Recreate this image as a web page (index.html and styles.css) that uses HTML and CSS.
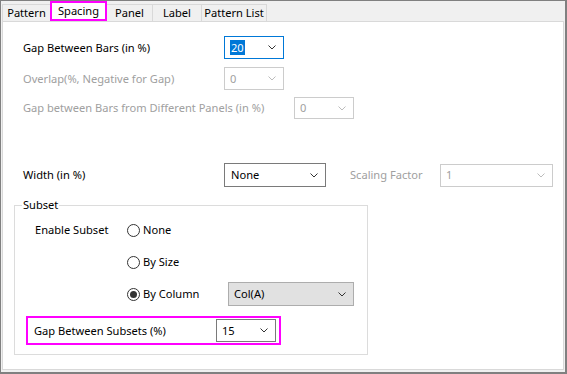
FILE: index.html
```html
<!DOCTYPE html>
<html>
<head>
<meta charset="utf-8">
<link rel="stylesheet" href="styles.css">
</head>
<body>
<div class="dialog">
  <div class="tabs">
    <div class="tab w-pattern">Pattern</div>
    <div class="tab tab-active w-spacing">Spacing</div>
    <div class="tab w-panel">Panel</div>
    <div class="tab w-label">Label</div>
    <div class="tab tab-last w-plist">Pattern List</div>
  </div>
  <div class="panel">
    <div class="row row1">
      <span class="label lw1">Gap Between Bars (in %)</span>
      <div class="combo combo-focus c60">
        <span class="value"><span class="sel">20</span></span>
        <svg class="chev" width="8" height="5" viewBox="0 0 8 5"><polyline points="0.5,0.5 4,4 7.5,0.5" fill="none" stroke="#333" stroke-width="1"/></svg>
      </div>
    </div>
    <div class="row row2">
      <span class="label lw1 disabled">Overlap(%, Negative for Gap)</span>
      <div class="combo combo-disabled c60">
        <span class="value">0</span>
        <svg class="chev" width="8" height="5" viewBox="0 0 8 5"><polyline points="0.5,0.5 4,4 7.5,0.5" fill="none" stroke="#bcbcbc" stroke-width="1"/></svg>
      </div>
    </div>
    <div class="row row3">
      <span class="label lw3 disabled">Gap between Bars from Different Panels (in %)</span>
      <div class="combo combo-disabled c60 h22">
        <span class="value">0</span>
        <svg class="chev" width="8" height="5" viewBox="0 0 8 5"><polyline points="0.5,0.5 4,4 7.5,0.5" fill="none" stroke="#bcbcbc" stroke-width="1"/></svg>
      </div>
    </div>
    <div class="row row4">
      <span class="label lw1">Width (in %)</span>
      <div class="combo c102 h24">
        <span class="value v7">None</span>
        <svg class="chev" width="8" height="5" viewBox="0 0 8 5"><polyline points="0.5,0.5 4,4 7.5,0.5" fill="none" stroke="#333" stroke-width="1"/></svg>
      </div>
      <span class="label lw-sf disabled">Scaling Factor</span>
      <div class="combo combo-disabled c113">
        <span class="value">1</span>
        <svg class="chev" width="8" height="5" viewBox="0 0 8 5"><polyline points="0.5,0.5 4,4 7.5,0.5" fill="none" stroke="#bcbcbc" stroke-width="1"/></svg>
      </div>
    </div>
    <fieldset class="group">
      <legend class="legend">Subset</legend>
      <div class="subset-grid">
        <span class="label">Enable Subset</span>
        <label class="radio-item"><span class="radio"></span>None</label>
        <span></span>
        <span></span>
        <label class="radio-item"><span class="radio"></span>By Size</label>
        <span></span>
        <span></span>
        <label class="radio-item"><span class="radio radio-on"></span>By Column</label>
        <div class="combo combo-button c126 h24">
          <span class="value v5">Col(A)</span>
          <svg class="chev" width="8" height="5" viewBox="0 0 8 5"><polyline points="0.5,0.5 4,4 7.5,0.5" fill="none" stroke="#333" stroke-width="1"/></svg>
        </div>
      </div>
      <div class="highlight-box">
        <span class="label lw-gs">Gap Between Subsets (%)</span>
        <div class="combo c60">
          <span class="value">15</span>
          <svg class="chev" width="8" height="5" viewBox="0 0 8 5"><polyline points="0.5,0.5 4,4 7.5,0.5" fill="none" stroke="#333" stroke-width="1"/></svg>
        </div>
      </div>
    </fieldset>
  </div>
</div>
</body>
</html>
```
FILE: styles.css
```css
* { box-sizing: border-box; }
html, body { margin: 0; padding: 0; }
body {
  width: 567px;
  height: 374px;
  font-family: "Noto Sans", "Open Sans", sans-serif;
  font-size: 11.1px;
  color: #000;
  background: #f0f0f0;
  overflow: hidden;
}
.dialog {
  width: 567px;
  height: 374px;
  background: #f0f0f0;
  border-style: solid;
  border-color: #808080;
  border-width: 1px 2px 2px 1px;
  display: flex;
  flex-direction: column;
}
.tabs {
  display: flex;
  align-items: flex-end;
  height: 20px;
  padding-left: 1px;
}
.tab {
  height: 17px;
  border-top: 1px solid #d9d9d9;
  border-left: 1px solid #d9d9d9;
  background: #f0f0f0;
  display: flex;
  align-items: center;
  justify-content: center;
  line-height: 14px;
  white-space: nowrap;
}
.tab-last { border-right: 1px solid #d9d9d9; }
.tab-active {
  height: 20px;
  background: #fff;
  border-right: 1px solid #d9d9d9;
  outline: 2px solid #ff00ff;
  outline-offset: -2px;
  padding-bottom: 2px;
}
.tab-active + .tab { border-left: none; }
.w-pattern { width: 48px; }
.w-spacing { width: 57px; }
.w-panel { width: 45px; }
.w-label { width: 49px; }
.w-plist { width: 66px; }

.panel {
  flex: 1;
  margin: 0 1px 2px 1px;
  background: #fff;
  border: 1px solid #d9d9d9;
  display: flex;
  flex-direction: column;
}
.row {
  display: flex;
  align-items: center;
  padding-left: 20px;
}
.row1 { margin-top: 14px; }
.row2 { margin-top: 8px; }
.row3 { margin-top: 7px; }
.row4 { margin-top: 44px; }
.label { white-space: nowrap; line-height: 16px; }
.lw1 { width: 201px; flex: none; }
.lw3 { width: 271px; flex: none; }
.lw-sf { width: 90px; flex: none; margin-left: 24px; }
.lw-gs { width: 182px; flex: none; }
.disabled { color: #a0a0a0; }

.combo {
  position: relative;
  height: 23px;
  border: 1px solid #7a7a7a;
  background: #fff;
  display: flex;
  align-items: center;
  justify-content: space-between;
  padding: 0 7px 0 5px;
  flex: none;
}
.combo-focus { border-color: #0078d7; }
.combo-disabled { border-color: #cccccc; color: #a0a0a0; }
.combo-button { background: #e1e1e1; border-color: #adadad; }
.c60 { width: 60px; }
.c102 { width: 102px; }
.c113 { width: 113px; }
.c126 { width: 126px; }
.h22 { height: 22px; }
.h24 { height: 24px; }
.value { line-height: 16px; }
.v7 { padding-left: 1px; }
.v5 { padding-left: 0; }
.sel {
  background: #0078d7;
  color: #fff;
  display: inline-block;
  line-height: 15px;
  padding: 0 1px;
}
.chev { display: block; }

.group {
  margin: 10px 0 0 11px;
  width: 354px;
  height: 158px;
  border: 1px solid #dcdcdc;
  padding: 0 0 0 0;
}
.legend {
  padding: 0 1px;
  margin-left: 7px;
  line-height: 16px;
}
.subset-grid {
  margin-top: 5px;
  padding-left: 20px;
  display: grid;
  grid-template-columns: 92px 101px 126px;
  grid-auto-rows: 24px;
  row-gap: 8px;
  align-items: center;
}
.radio-item {
  display: flex;
  align-items: center;
  white-space: nowrap;
  line-height: 16px;
}
.radio {
  width: 13px;
  height: 13px;
  border: 1px solid #333;
  border-radius: 50%;
  background: #fff;
  margin-right: 3px;
  display: flex;
  align-items: center;
  justify-content: center;
  flex: none;
}
.radio-on::after {
  content: "";
  width: 7px;
  height: 7px;
  border-radius: 50%;
  background: #333;
}
.highlight-box {
  margin: 10px 0 0 11px;
  width: 255px;
  height: 29px;
  border: 2px solid #ff00ff;
  padding: 1px 3px 1px 6px;
  display: flex;
  align-items: center;
}
```
